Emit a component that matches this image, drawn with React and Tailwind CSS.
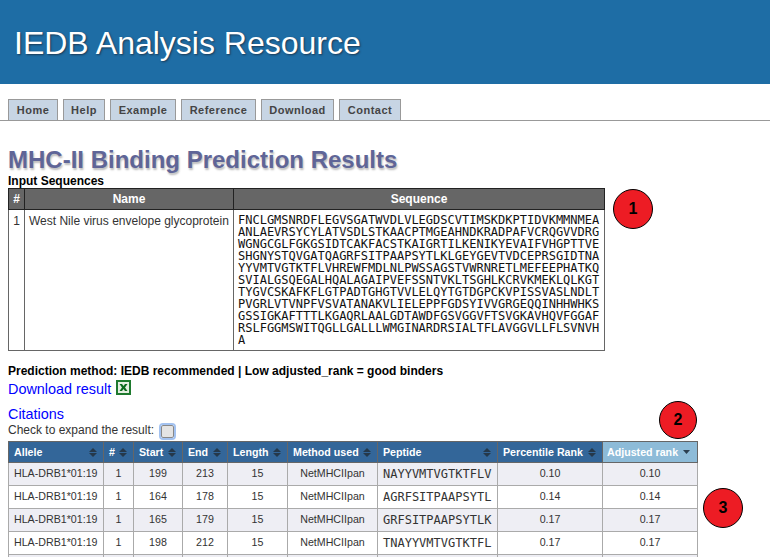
import React from "react";

const tabs = [
  { label: "Home", w: "w-[50px]" },
  { label: "Help", w: "w-[42px]" },
  { label: "Example", w: "w-[66px]" },
  { label: "Reference", w: "w-[75px]" },
  { label: "Download", w: "w-[73px]" },
  { label: "Contact", w: "w-[62px]" },
];

const sequence = [
  "FNCLGMSNRDFLEGVSGATWVDLVLEGDSCVTIMSKDKPTIDVKMMNMEA",
  "ANLAEVRSYCYLATVSDLSTKAACPTMGEAHNDKRADPAFVCRQGVVDRG",
  "WGNGCGLFGKGSIDTCAKFACSTKAIGRTILKENIKYEVAIFVHGPTTVE",
  "SHGNYSTQVGATQAGRFSITPAAPSYTLKLGEYGEVTVDCEPRSGIDTNA",
  "YYVMTVGTKTFLVHREWFMDLNLPWSSAGSTVWRNRETLMEFEEPHATKQ",
  "SVIALGSQEGALHQALAGAIPVEFSSNTVKLTSGHLKCRVKMEKLQLKGT",
  "TYGVCSKAFKFLGTPADTGHGTVVLELQYTGTDGPCKVPISSVASLNDLT",
  "PVGRLVTVNPFVSVATANAKVLIELEPPFGDSYIVVGRGEQQINHHWHKS",
  "GSSIGKAFTTTLKGAQRLAALGDTAWDFGSVGGVFTSVGKAVHQVFGGAF",
  "RSLFGGMSWITQGLLGALLLWMGINARDRSIALTFLAVGGVLLFLSVNVH",
  "A",
];

const columns = [
  { label: "Allele", w: "w-[95px]" },
  { label: "#", w: "w-[30px]" },
  { label: "Start", w: "w-[49px]" },
  { label: "End", w: "w-[45px]" },
  { label: "Length", w: "w-[60px]" },
  { label: "Method used", w: "w-[90px]" },
  { label: "Peptide", w: "w-[120px]" },
  { label: "Percentile Rank", w: "w-[105px]" },
];

const rows = [
  ["1", "199", "213", "15", "NetMHCIIpan", "NAYYVMTVGTKTFLV", "0.10", "0.10"],
  ["1", "164", "178", "15", "NetMHCIIpan", "AGRFSITPAAPSYTL", "0.14", "0.14"],
  ["1", "165", "179", "15", "NetMHCIIpan", "GRFSITPAAPSYTLK", "0.17", "0.17"],
  ["1", "198", "212", "15", "NetMHCIIpan", "TNAYYVMTVGTKTFL", "0.17", "0.17"],
];

const SortIcon = () => (
  <svg width="8" height="9" viewBox="0 0 8 9" className="shrink-0">
    <path d="M4 0 L8 4 H0 Z M4 9 L0 5 H8 Z" fill="#25384a" />
  </svg>
);

const Marker = ({ n, className }) => (
  <div
    className={`absolute flex items-center justify-center rounded-full border border-black bg-[#ed1c24] font-bold text-base text-black ${className}`}
  >
    {n}
  </div>
);

const App = () => {
  return (
    <div className="relative h-[557px] w-[770px] overflow-hidden bg-white text-xs text-[#333] font-['Liberation_Sans',Arial,sans-serif]">
      {/* Banner */}
      <header className="h-[84px] bg-[#1e6da5] pl-[14px] pt-[24px] text-[32px] leading-[38px] text-white [text-shadow:1px_1px_2px_#1b3a55]">
        IEDB Analysis Resource
      </header>

      {/* Tabs */}
      <nav className="mt-[15px] flex h-[22px] gap-[5px] border-b border-[#999] pl-2">
        {tabs.map((t) => (
          <div
            key={t.label}
            className={`${t.w} h-[21px] border border-b-0 border-[#999] bg-[#c7d5e4] text-center text-[11px] font-bold leading-[21px] tracking-[0.5px] text-[#444]`}
          >
            {t.label}
          </div>
        ))}
      </nav>

      <main className="px-2">
        <h1 className="mt-[25px] text-2xl leading-[27px] font-bold text-[#5f6597] [text-shadow:1px_2px_2px_#bbb]">
          MHC-II Binding Prediction Results
        </h1>
        <div className="mt-px text-xs font-bold leading-[14px] text-black">Input Sequences</div>

        {/* Input sequences */}
        <table className="w-[597px] table-fixed border-collapse border border-[#666]">
          <thead>
            <tr className="h-[21px] bg-[#666] text-center text-xs font-bold text-white">
              <th className="w-[16px] border border-[#222]">#</th>
              <th className="w-[209px] border border-[#222]">Name</th>
              <th className="border border-[#222]">Sequence</th>
            </tr>
          </thead>
          <tbody>
            <tr className="align-top">
              <td className="border border-[#666] pt-[3px] text-center">1</td>
              <td className="border border-[#666] pl-1 pt-[3px] whitespace-nowrap">West Nile virus envelope glycoprotein</td>
              <td className="border border-[#666] pl-1 pt-1 pb-1 font-['DejaVu_Sans_Mono',monospace] leading-[12px] text-[#111]">
                {sequence.map((line) => (
                  <div key={line}>{line}</div>
                ))}
              </td>
            </tr>
          </tbody>
        </table>

        <div className="mt-[13px] text-xs font-bold leading-[14px] text-black">
          Prediction method: IEDB recommended | Low adjusted_rank = good binders
        </div>
        <div className="mt-[3px] flex h-[16px] items-center gap-[5px] text-[14.4px] leading-[16px] text-[#0000ff]">
          <span>Download result</span>
          <svg width="15" height="15" viewBox="0 0 15 15" className="mb-[3px]">
            <rect x="1" y="1" width="13" height="13" fill="#e6efe2" stroke="#1e7a2e" strokeWidth="2" />
            <path d="M3.5 4 H6 L7.5 6 L9 4 H11.5 L9 7.5 L11.5 11 H9 L7.5 9 L6 11 H3.5 L6 7.5 Z" fill="#0d6b1f" />
          </svg>
        </div>
        <div className="mt-[9px] text-[14.4px] leading-[16px] text-[#0000ff]">Citations</div>
        <div className="flex h-[15px] items-center text-xs leading-[14px]">
          <span>Check to expand the result:</span>
          <span className="ml-[7px] mt-[4px] box-content h-[11px] w-[11px] rounded-[2px] border border-[#888] bg-[#e4e4e4] outline-2 outline-[#a3c2f0]" />
        </div>

        {/* Results */}
        <table className="mt-[4px] w-[690px] table-fixed border-collapse text-[10.67px]">
          <thead>
            <tr className="h-[21px] text-white">
              {columns.map((c) => (
                <th key={c.label} className={`${c.w} border border-[#666] bg-[#336699] pl-[5px] pr-[6px] font-bold`}>
                  <div className="flex items-center justify-between whitespace-nowrap">
                    <span>{c.label}</span>
                    <SortIcon />
                  </div>
                </th>
              ))}
              <th className="border border-[#666] bg-[#8dbbd8] pl-[4px] pr-[7px] font-bold">
                <div className="flex items-center justify-between whitespace-nowrap">
                  <span>Adjusted rank</span>
                  <svg width="7" height="4" viewBox="0 0 7 4">
                    <path d="M0 0 H7 L3.5 4 Z" fill="#2b3f50" />
                  </svg>
                </div>
              </th>
            </tr>
          </thead>
          <tbody>
            {rows.map((r, i) => (
              <tr key={i} className={`h-[23px] text-center ${i % 2 === 0 ? "bg-[#eeeef4]" : "bg-white"}`}>
                <td className="border border-[#aaa] pb-px pl-[5px] text-left">HLA-DRB1*01:19</td>
                {r.map((v, j) =>
                  j === 5 ? (
                    <td key={j} className="border border-[#aaa] pb-px pl-[5px] text-left font-['DejaVu_Sans_Mono',monospace] text-xs">
                      {v}
                    </td>
                  ) : (
                    <td key={j} className="border border-[#aaa] pb-px">
                      {v}
                    </td>
                  )
                )}
              </tr>
            ))}
            {/* next row is cut by the window, only its borders show */}
            <tr className="h-[23px] bg-[#eeeef4]">
              {Array.from({ length: 9 }).map((_, j) => (
                <td key={j} className="border border-[#aaa]" />
              ))}
            </tr>
          </tbody>
        </table>
      </main>

      {/* Annotation markers */}
      <Marker n="1" className="left-[613px] top-[189px] h-[40px] w-[40px]" />
      <Marker n="2" className="left-[659px] top-[401px] h-[38px] w-[38px]" />
      <Marker n="3" className="left-[703px] top-[488px] h-[40px] w-[40px]" />
    </div>
  );
};

export default App;
